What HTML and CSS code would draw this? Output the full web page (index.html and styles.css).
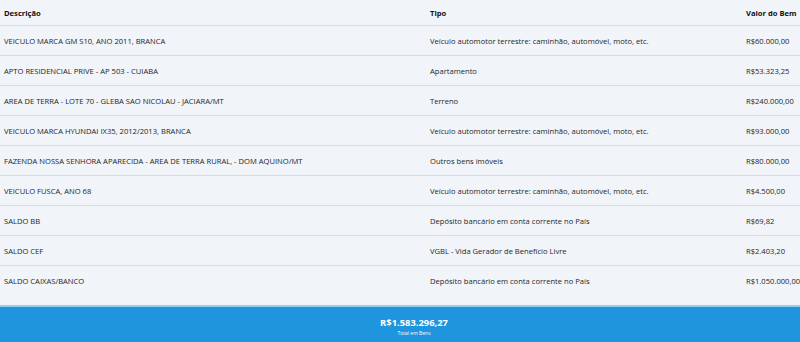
FILE: index.html
```html
<!DOCTYPE html>
<html lang="pt-BR">
<head>
<meta charset="utf-8">
<title>Bens</title>
<link rel="stylesheet" href="styles.css">
</head>
<body>
<div class="page">
  <div class="table">
    <div class="row head">
      <div class="cell">Descrição</div>
      <div class="cell">Tipo</div>
      <div class="cell">Valor do Bem</div>
    </div>
    <div class="row">
      <div class="cell">VEICULO MARCA GM S10, ANO 2011, BRANCA</div>
      <div class="cell">Veículo automotor terrestre: caminhão, automóvel, moto, etc.</div>
      <div class="cell">R$60.000,00</div>
    </div>
    <div class="row">
      <div class="cell">APTO RESIDENCIAL PRIVE - AP 503 - CUIABA</div>
      <div class="cell">Apartamento</div>
      <div class="cell">R$53.323,25</div>
    </div>
    <div class="row">
      <div class="cell">AREA DE TERRA - LOTE 70 - GLEBA SAO NICOLAU - JACIARA/MT</div>
      <div class="cell">Terreno</div>
      <div class="cell">R$240.000,00</div>
    </div>
    <div class="row">
      <div class="cell">VEICULO MARCA HYUNDAI IX35, 2012/2013, BRANCA</div>
      <div class="cell">Veículo automotor terrestre: caminhão, automóvel, moto, etc.</div>
      <div class="cell">R$93.000,00</div>
    </div>
    <div class="row">
      <div class="cell">FAZENDA NOSSA SENHORA APARECIDA - AREA DE TERRA RURAL, - DOM AQUINO/MT</div>
      <div class="cell">Outros bens imóveis</div>
      <div class="cell">R$80.000,00</div>
    </div>
    <div class="row">
      <div class="cell">VEICULO FUSCA, ANO 68</div>
      <div class="cell">Veículo automotor terrestre: caminhão, automóvel, moto, etc.</div>
      <div class="cell">R$4.500,00</div>
    </div>
    <div class="row">
      <div class="cell">SALDO BB</div>
      <div class="cell">Depósito bancário em conta corrente no País</div>
      <div class="cell">R$69,82</div>
    </div>
    <div class="row">
      <div class="cell">SALDO CEF</div>
      <div class="cell">VGBL - Vida Gerador de Benefício Livre</div>
      <div class="cell">R$2.403,20</div>
    </div>
    <div class="row last">
      <div class="cell">SALDO CAIXAS/BANCO</div>
      <div class="cell">Depósito bancário em conta corrente no País</div>
      <div class="cell">R$1.050.000,00</div>
    </div>
  </div>
  <div class="total">
    <div class="total-value">R$1.583.296,27</div>
    <div class="total-label">Total em Bens</div>
  </div>
</div>
</body>
</html>
```

FILE: styles.css
```css
html, body {
  margin: 0;
  padding: 0;
}
body {
  background: #f1f4f9;
  font-family: "Open Sans", "Noto Sans", sans-serif;
  color: #1f1f1f;
  width: 800px;
  height: 342px;
  overflow: hidden;
}
.page {
  display: flex;
  flex-direction: column;
}
.table {
  display: flex;
  flex-direction: column;
  padding-bottom: 10px;
}
.row {
  display: grid;
  grid-template-columns: 426px 316px 1fr;
  align-items: center;
  height: 29px;
  padding-left: 4px;
  border-bottom: 1px solid #d8dce2;
  font-size: 7.6px;
  white-space: nowrap;
}
.row.head {
  height: 25px;
  font-weight: 700;
  color: #111;
}
.row.last {
  border-bottom: none;
}
.total {
  background: #1e95dc;
  border-top: 2px solid #93cdf1;
  height: 34px;
  display: flex;
  flex-direction: column;
  align-items: center;
  padding-top: 10px;
  padding-left: 28px;
  color: #fff;
}
.total-value {
  font-size: 9.4px;
  font-weight: 700;
  line-height: 12px;
}
.total-label {
  font-size: 5px;
  line-height: 8px;
}
```
